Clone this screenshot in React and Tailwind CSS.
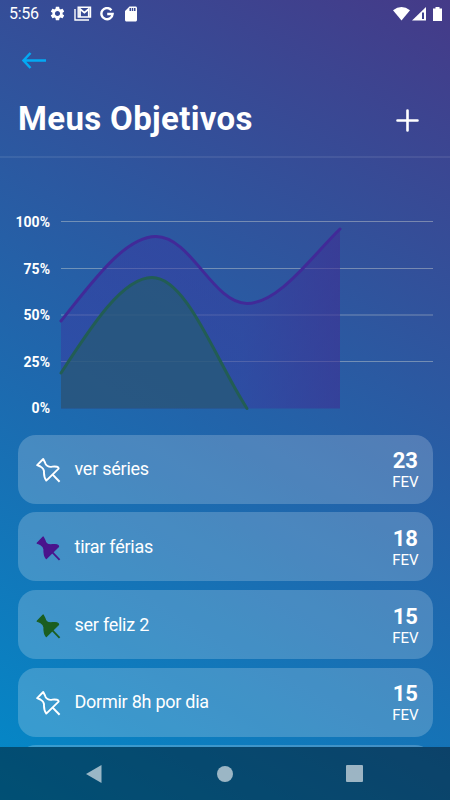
import React from 'react';
import { MdSettings, MdSdCard } from 'react-icons/md';

const goals = [
    { title: 'ver séries', day: '23', month: 'FEV', pin: 'none' },
    { title: 'tirar férias', day: '18', month: 'FEV', pin: '#4a148c' },
    { title: 'ser feliz 2', day: '15', month: 'FEV', pin: '#1b5e20' },
    { title: 'Dormir 8h por dia', day: '15', month: 'FEV', pin: 'none' },
    { title: '', day: '', month: '', pin: '' },
];

const levels = ['100%', '75%', '50%', '25%', '0%'];

const PinIcon = ({ color }) => {
    const outlined = color === 'none';
    return (
        <svg className="mt-[3px]" width="25" height="25" viewBox="0 0 25 25" fill={color} stroke={outlined ? '#ffffff' : color} strokeWidth={outlined ? 1.9 : 1.2} strokeLinejoin="round">
            <path d="M7.2 1 L1.2 7.2 L4.4 8.5 C6.6 9.8 7.8 11 8 13.2 C7.8 17 8.4 20.3 10.3 22.6 L22.6 10.6 C22.8 8.8 20 8.2 16.4 8.6 C12.6 9.4 9.6 7.6 8.9 4.3 Z" />
            <path d="M16.4 16.4L23.6 23.8" fill="none" strokeWidth={outlined ? 2 : 1.8} />
        </svg>
    );
};

const StatusBar = () => (
    <div className="flex h-[26px] items-center justify-between pl-[9px] pr-2 pt-px text-white">
        <div className="flex items-center">
            <span className="w-[40px] text-base leading-none tracking-[-0.3px]">5:56</span>
            <MdSettings size={17} />
            <svg className="ml-[8px]" width="18" height="15" viewBox="0 0 18 15" fill="none" stroke="white" strokeWidth="1.4">
                <path d="M1 3V14H15" />
                <path d="M4.2 1.2H16.5V11H4.2Z" />
                <path d="M6 11V3L10.4 6.6L14.8 3V11" strokeWidth="1.8" />
            </svg>
            <svg className="ml-2" width="14" height="14" viewBox="0 0 14 14" fill="none" stroke="white" strokeWidth="2.4">
                <path d="M11.4 3.2A5.6 5.6 0 1 0 12.6 7H7.2" />
            </svg>
            <MdSdCard className="ml-[8px]" size={18} />
        </div>
        <div className="flex items-center">
            <svg width="17" height="14" viewBox="0 0 17 14" fill="white">
                <path d="M0 3.2Q8.5 -3 17 3.2L8.5 13.5Z" />
            </svg>
            <svg className="ml-0.5" width="14" height="14" viewBox="0 0 14 14">
                <path d="M0 13.5L14 0V13.5Z" fill="white" />
                <path d="M10 5.5H12V12H10Z" fill="#3d4390" />
            </svg>
            <svg className="ml-[7px]" width="9" height="14" viewBox="0 0 9 14" fill="white">
                <path d="M2.5 0H6.5V1.5H9V14H0V1.5H2.5Z" />
            </svg>
        </div>
    </div>
);

const Header = () => (
    <header className="h-[132px] border-b-2 border-white/8 pt-[23px]">
        <svg className="ml-[21px]" width="26" height="22" viewBox="0 0 26 22" fill="none" stroke="#03a9f4" strokeWidth="2.5">
            <path d="M25 11.5H2.5M9.5 4L2.5 11.5L9.5 19" />
        </svg>
        <div className="mt-[26px] flex items-center justify-between pl-[18px] pr-[31px]">
            <h1 className="text-[33px] font-bold leading-[44px] tracking-[0.34px] text-white">Meus Objetivos</h1>
            <svg className="mt-0.5" width="23" height="23" viewBox="0 0 23 23" fill="none" stroke="white" strokeWidth="2.6" strokeLinecap="round">
                <path d="M11.5 1.5V21.5M1.5 11.5H21.5" />
            </svg>
        </div>
    </header>
);

const Chart = () => (
    <section className="flex h-[257px] pt-[54px]">
        <div className="flex w-[50px] shrink-0 flex-col text-right text-[14px] font-bold text-white">
            {levels.map((level) => (
                <span key={level} className="h-[46.6px] shrink-0 leading-5">{level}</span>
            ))}
        </div>
        <svg className="ml-[8px] shrink-0" width="378" height="204" viewBox="58 212 378 204" fill="none">
            <defs>
                <linearGradient id="purpleArea" x1="61" x2="340" y1="0" y2="0" gradientUnits="userSpaceOnUse">
                    <stop offset="0" stopColor="#3838a2" stopOpacity="0.5" />
                    <stop offset="0.65" stopColor="#353d9f" stopOpacity="0.55" />
                    <stop offset="1" stopColor="#3d3093" stopOpacity="0.62" />
                </linearGradient>
            </defs>
            <path d="M61 221.5H433M61 268.5H433M61 315H433M61 361.5H433" stroke="#e8e8d8" strokeOpacity="0.38" />
            <path d="M61 321C93 281 125 236.500 156 236.500C191 236.500 213 303.500 247 303.500C279 303.500 312 256 340 229V408.500H61Z" fill="url(#purpleArea)" />
            <path d="M61 321C93 281 125 236.500 156 236.500C191 236.500 213 303.500 247 303.500C279 303.500 312 256 340 229" stroke="#412a98" strokeWidth="3" strokeLinecap="round" />
            <path d="M61 373C92 325 123 277.500 152 277.500C187 277.500 216 361 247 408.500H61Z" fill="#275a76" fillOpacity="0.75" />
            <path d="M61 373C92 325 123 277.500 152 277.500C187 277.500 216 361 247 408.500" stroke="#225d54" strokeWidth="3" strokeLinecap="round" />
        </svg>
    </section>
);

const GoalCard = ({ goal }) => (
    <li className="flex h-[69px] shrink-0 items-center rounded-[18px] bg-white/20 pl-[18.5px] pr-3.5 text-white">
        {goal.title && (
            <>
                <PinIcon color={goal.pin} />
                <span className="ml-[13.5px] flex-1 text-[18px] leading-6 tracking-[-0.25px]">{goal.title}</span>
                <div className="flex flex-col items-center pt-1">
                    <span className="text-[22px] font-bold leading-[22px]">{goal.day}</span>
                    <span className="text-[15px] leading-5">{goal.month}</span>
                </div>
            </>
        )}
    </li>
);

const NavBar = () => (
    <nav className="flex h-[53px] shrink-0 items-center bg-black/42 pl-[86px]">
        <svg width="16" height="18" viewBox="0 0 16 18" fill="white" fillOpacity="0.6">
            <path d="M15.500 0V18L0 9Z" />
        </svg>
        <div className="ml-[115px] size-4 rounded-full bg-white/60" />
        <div className="ml-[113px] h-[17px] w-[17px] rounded-[1px] bg-white/60" />
    </nav>
);

const App = () => (
    <div className="flex h-[800px] w-[450px] flex-col overflow-hidden bg-[linear-gradient(29.36deg,#028ac9,#453a88)] font-['Roboto',sans-serif]">
        <StatusBar />
        <main className="h-[721px] overflow-hidden">
            <Header />
            <Chart />
            <ul className="mt-[19.7px] flex flex-col gap-[8.7px] px-[17.5px]">
                {goals.map((goal, index) => (
                    <GoalCard key={index} goal={goal} />
                ))}
            </ul>
        </main>
        <NavBar />
    </div>
);

export default App;
